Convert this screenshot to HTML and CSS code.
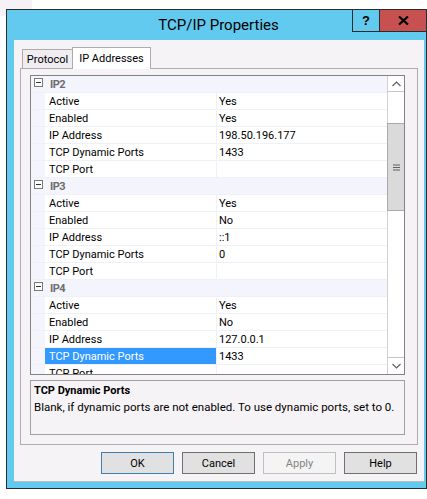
FILE: index.html
```html
<!DOCTYPE html>
<html lang="en">
<head>
<meta charset="utf-8">
<title>TCP/IP Properties</title>
<link rel="stylesheet" href="styles.css">
</head>
<body>
<div class="bgpatch"></div>
<div class="window">
  <div class="titlebar">
    <div class="title">TCP/IP Properties</div>
    <div class="caption">
      <div class="cap-btn help-btn">?</div>
      <div class="cap-btn close-btn">
        <svg width="11" height="9" viewBox="0 0 11 9"><path d="M1 0.5 L10 8.5 M10 0.5 L1 8.5" stroke="#000" stroke-width="2.2" fill="none"/></svg>
      </div>
    </div>
  </div>
  <div class="frame">
    <div class="client">
      <div class="tabs">
        <div class="tab">Protocol</div>
        <div class="tab active">IP Addresses</div>
      </div>
      <div class="tabpage">
        <div class="grid">
          <div class="rows">
            <div class="group"><span class="toggle"></span><span class="gname">IP2</span></div>
            <div class="row"><span class="indent"></span><span class="name">Active</span><span class="value">Yes</span></div>
            <div class="row"><span class="indent"></span><span class="name">Enabled</span><span class="value">Yes</span></div>
            <div class="row"><span class="indent"></span><span class="name">IP Address</span><span class="value">198.50.196.177</span></div>
            <div class="row"><span class="indent"></span><span class="name">TCP Dynamic Ports</span><span class="value">1433</span></div>
            <div class="row"><span class="indent"></span><span class="name">TCP Port</span><span class="value"></span></div>
            <div class="group"><span class="toggle"></span><span class="gname">IP3</span></div>
            <div class="row"><span class="indent"></span><span class="name">Active</span><span class="value">Yes</span></div>
            <div class="row"><span class="indent"></span><span class="name">Enabled</span><span class="value">No</span></div>
            <div class="row"><span class="indent"></span><span class="name">IP Address</span><span class="value">::1</span></div>
            <div class="row"><span class="indent"></span><span class="name">TCP Dynamic Ports</span><span class="value">0</span></div>
            <div class="row"><span class="indent"></span><span class="name">TCP Port</span><span class="value"></span></div>
            <div class="group"><span class="toggle"></span><span class="gname">IP4</span></div>
            <div class="row"><span class="indent"></span><span class="name">Active</span><span class="value">Yes</span></div>
            <div class="row"><span class="indent"></span><span class="name">Enabled</span><span class="value">No</span></div>
            <div class="row"><span class="indent"></span><span class="name">IP Address</span><span class="value">127.0.0.1</span></div>
            <div class="row"><span class="indent"></span><span class="name selected">TCP Dynamic Ports</span><span class="value">1433</span></div>
            <div class="row"><span class="indent"></span><span class="name">TCP Port</span><span class="value"></span></div>
          </div>
          <div class="scrollbar">
            <div class="sb-btn sb-up">
              <svg width="9" height="6" viewBox="0 0 9 6"><path d="M0.5 5 L4.5 1 L8.5 5" stroke="#606060" stroke-width="1.2" fill="none"/></svg>
            </div>
            <div class="sb-track sb-track-top"></div>
            <div class="sb-thumb">
              <svg width="7" height="7" viewBox="0 0 7 7"><path d="M0 1 H7 M0 3.5 H7 M0 6 H7" stroke="#606060" stroke-width="1.1" fill="none"/></svg>
            </div>
            <div class="sb-track sb-track-bottom"></div>
            <div class="sb-btn sb-down">
              <svg width="9" height="6" viewBox="0 0 9 6"><path d="M0.5 1 L4.5 5 L8.5 1" stroke="#606060" stroke-width="1.2" fill="none"/></svg>
            </div>
          </div>
        </div>
        <div class="desc">
          <div class="desc-title">TCP Dynamic Ports</div>
          <div class="desc-text">Blank, if dynamic ports are not enabled. To use dynamic ports, set to 0.</div>
        </div>
      </div>
      <div class="buttons">
        <div class="btn default">OK</div>
        <div class="btn">Cancel</div>
        <div class="btn disabled">Apply</div>
        <div class="btn">Help</div>
      </div>
    </div>
  </div>
</div>
</body>
</html>
```

FILE: styles.css
```css
html, body {
  margin: 0;
}
body {
  padding: 9px 0 0 6px;
  background: #ffffff;
  font-family: Roboto, "Liberation Sans", sans-serif;
  font-size: 11px;
  color: #000;
  position: relative;
}
.bgpatch {
  position: absolute;
  left: 0;
  top: 0;
  width: 32px;
  height: 16px;
  background: #f5f1f4;
  z-index: -1;
}
.window {
  width: 421px;
  height: 480px;
  box-sizing: border-box;
  border: 1px solid #2b2b2b;
  background: #62c9ef;
  display: flex;
  flex-direction: column;
}
.titlebar {
  height: 30px;
  display: grid;
  flex: none;
}
.title {
  grid-area: 1 / 1;
  justify-self: center;
  align-self: center;
  font-size: 15px;
  line-height: 20px;
  padding-left: 4px;
}
.caption {
  grid-area: 1 / 1;
  justify-self: end;
  align-self: start;
  display: flex;
}
.cap-btn {
  height: 21px;
  border-left: 1px solid #2b2b2b;
  border-bottom: 1px solid #2b2b2b;
  display: flex;
  align-items: center;
  justify-content: center;
}
.help-btn {
  width: 26px;
  font-family: "Liberation Sans", sans-serif;
  font-weight: bold;
  font-size: 13px;
}
.close-btn {
  width: 46px;
  background: #c75050;
}
.frame {
  flex: 1;
  padding: 0 2px 6px 7px;
}
.client {
  height: 442px;
  box-sizing: border-box;
  background: #f6f3f6;
  border-bottom: 1px solid #b9b9b9;
  padding: 7px 6px 0 6px;
  display: flex;
  flex-direction: column;
}
.tabs {
  height: 21px;
  display: flex;
  align-items: flex-end;
  margin-left: 2px;
}
.tab {
  height: 19px;
  width: 50px;
  box-sizing: border-box;
  border: 1px solid #acacac;
  border-bottom: none;
  border-right: none;
  background: #f0edf0;
  display: flex;
  align-items: center;
  justify-content: center;
}
.tab.active {
  height: 22px;
  width: 79px;
  border-right: 1px solid #acacac;
  margin-bottom: -1px;
  background: #ffffff;
  position: relative;
  z-index: 1;
  padding-bottom: 1px;
}
.tabpage {
  height: 377px;
  box-sizing: border-box;
  border: 1px solid #adadad;
  padding: 6px 12px 0 9px;
  background: #f6f3f6;
}
.grid {
  height: 300px;
  box-sizing: border-box;
  border: 1px solid #828282;
  display: flex;
  background: #ffffff;
}
.rows {
  width: 356px;
  overflow: hidden;
}
.group, .row {
  height: 17px;
  box-sizing: border-box;
  display: flex;
  line-height: 17px;
  border-bottom: 1px solid #f0f0f8;
}
.group {
  background: #f4f4fc;
  align-items: center;
}
.toggle {
  width: 9px;
  height: 9px;
  box-sizing: border-box;
  border: 1px solid #7a7a7a;
  margin-left: 3px;
  margin-top: -3px;
  display: flex;
  align-items: center;
  justify-content: center;
  background: #fff;
}
.toggle::after {
  content: "";
  width: 5px;
  height: 1px;
  background: #333;
}
.gname {
  margin-left: 7px;
  font-weight: bold;
  color: #6d6d6d;
  letter-spacing: -0.5px;
}
.indent {
  width: 14px;
  background: #f4f4fc;
  flex: none;
}
.name {
  width: 172px;
  box-sizing: border-box;
  padding-left: 4px;
  border-right: 1px solid #f0f0f8;
  flex: none;
  white-space: nowrap;
}
.name.selected {
  background: #3399ff;
  color: #ffffff;
}
.value {
  flex: 1;
  padding-left: 2px;
  white-space: nowrap;
}
.scrollbar {
  width: 17px;
  display: flex;
  flex-direction: column;
}
.sb-btn {
  box-sizing: border-box;
  border-left: 1px solid #d0d0d0;
  display: flex;
  align-items: center;
  justify-content: center;
  background: #fff;
}
.sb-up {
  height: 16px;
  border-bottom: 1px solid #c4c4c4;
}
.sb-down {
  height: 17px;
  border-top: 1px solid #c4c4c4;
}
.sb-track {
  border-left: 1px solid #d0d0d0;
  background: #ffffff;
}
.sb-track-top {
  height: 31px;
}
.sb-track-bottom {
  height: 146px;
}
.sb-thumb {
  height: 88px;
  box-sizing: border-box;
  border: 1px solid #a9a9a9;
  border-right: none;
  background: #dadada;
  display: flex;
  align-items: center;
  justify-content: center;
}
.desc {
  margin-top: 5px;
  height: 55px;
  box-sizing: border-box;
  border: 1px solid #a0a0a0;
  padding: 1px 3px;
  line-height: 17px;
}
.desc-title {
  font-weight: bold;
}
.desc-text {
  font-size: 11.5px;
}
.buttons {
  margin-top: 7px;
  display: flex;
  justify-content: flex-end;
  gap: 8px;
  padding-right: 1px;
}
.btn {
  width: 73px;
  height: 22px;
  box-sizing: border-box;
  border: 1px solid #707070;
  background: #e1e1e1;
  display: flex;
  align-items: center;
  justify-content: center;
}
.btn.default {
  border-color: #3c7fb1;
}
.btn.disabled {
  border-color: #bfbfbf;
  background: #f4f4f4;
  color: #838383;
}
```
